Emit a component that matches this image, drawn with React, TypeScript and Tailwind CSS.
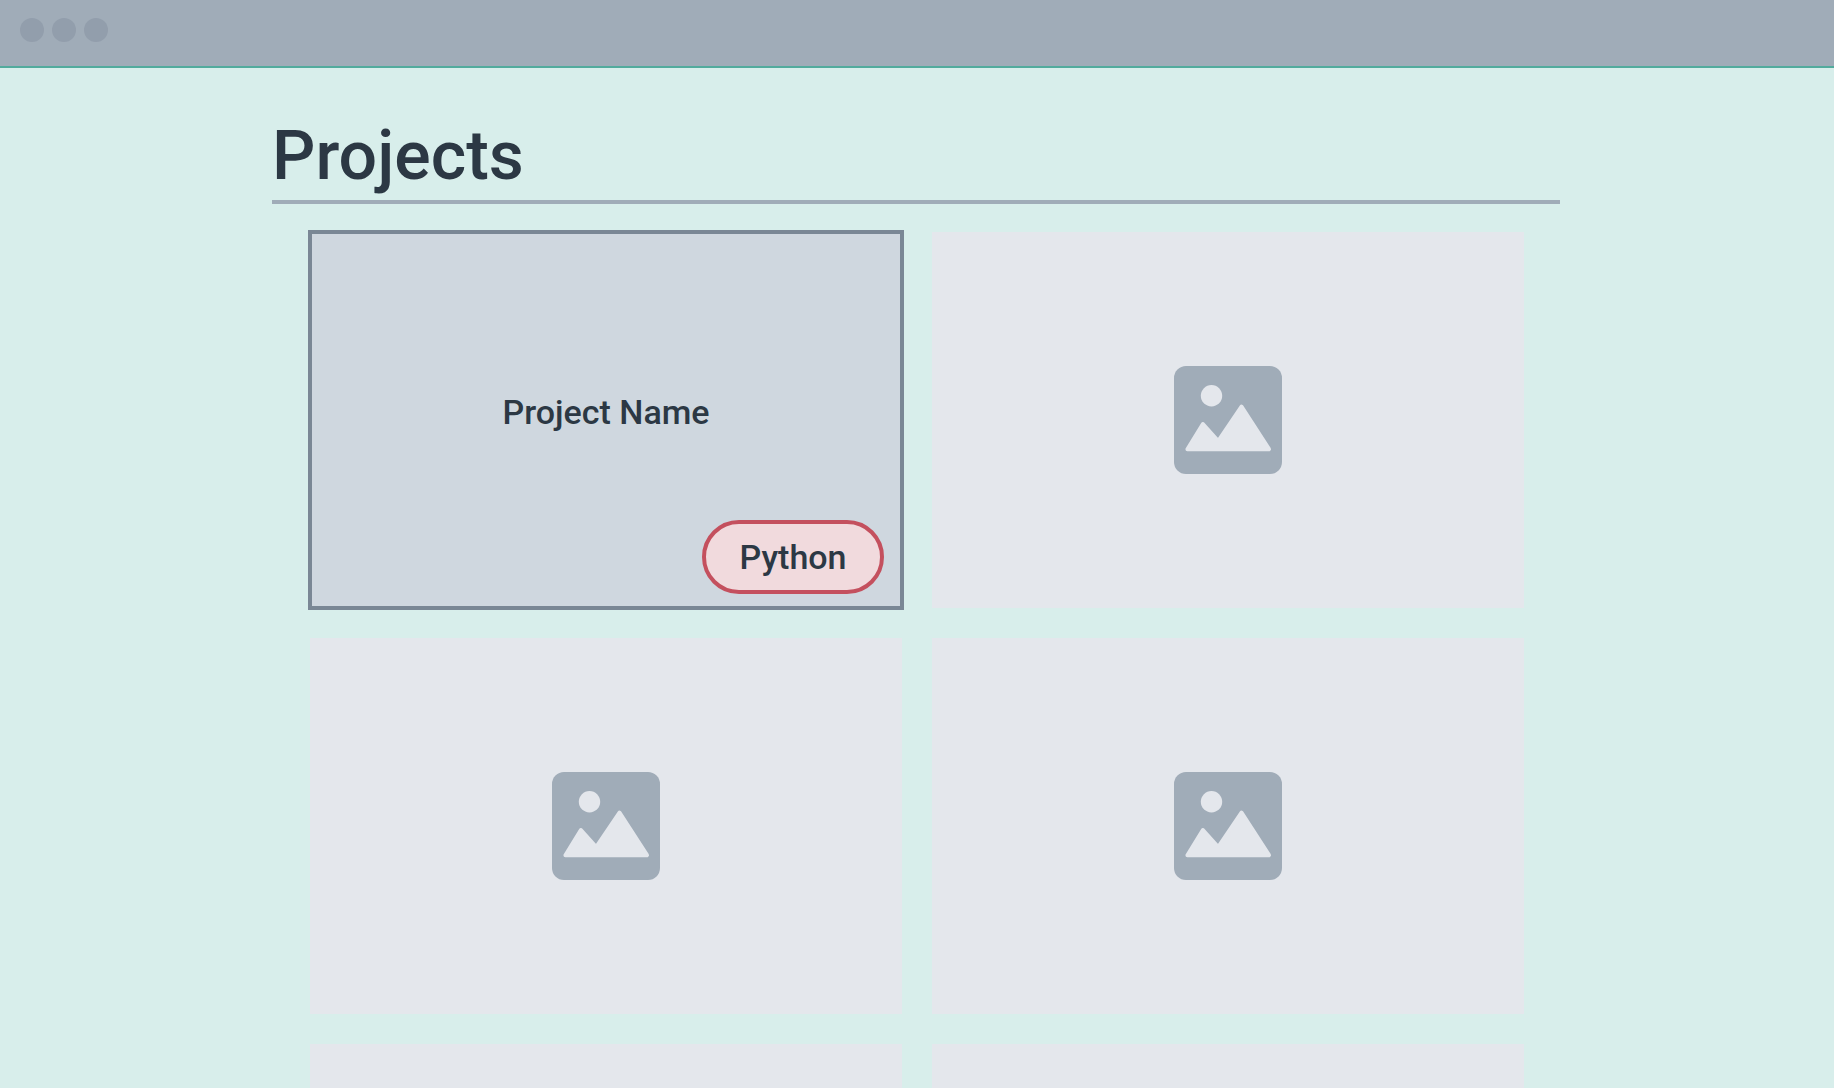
function WindowBar() {
  return (
    <header className="flex h-[68px] items-start gap-2 border-b-2 border-[#52ab9d] bg-[#a0acb8] px-5 pt-[18px]">
      <span className="size-6 rounded-full bg-[#929eac]" />
      <span className="size-6 rounded-full bg-[#929eac]" />
      <span className="size-6 rounded-full bg-[#929eac]" />
    </header>
  );
}

function PictureIcon() {
  return (
    <svg viewBox="0 0 108 108" className="size-[108px]" aria-hidden="true">
      <rect width="108" height="108" rx="12" fill="#a0acb8" />
      <circle cx="37.5" cy="29.8" r="10.7" fill="#e4e7ec" />
      <path
        d="M13.4 83.2 L28.9 58 L44.2 75 L67.5 40.6 L95 83.2 Z"
        fill="#e4e7ec"
        stroke="#e4e7ec"
        strokeWidth="4"
        strokeLinejoin="round"
      />
    </svg>
  );
}

function PlaceholderCard() {
  return (
    <li className="flex items-center justify-center bg-[#e4e7ec]">
      <PictureIcon />
    </li>
  );
}

function ProjectCard({ name, tag }: { name: string; tag: string }) {
  return (
    <li className="relative -m-0.5 flex items-center justify-center border-4 border-[#7a8795] bg-[#cfd7df] pb-4">
      <h2 className="text-[34px] leading-10 font-medium">{name}</h2>
      <span className="absolute right-4 bottom-3 flex h-[74px] min-w-[182px] items-center justify-center rounded-full border-4 border-[#c4505e] bg-[#f1dadd] px-8 text-[34px] leading-10 font-medium">
        {tag}
      </span>
    </li>
  );
}

export default function App() {
  return (
    <div className="h-screen overflow-hidden bg-[#d8eeeb] font-['Roboto','Liberation_Sans',sans-serif] text-[#2c3844]">
      <WindowBar />
      <main className="mx-auto max-w-[1290px] pt-12">
        <h1 className="pb-1 text-[68px] leading-[80px] font-medium">Projects</h1>
        <hr className="mr-0.5 border-t-4 border-[#a0acb8]" />
        <ul className="mt-7 grid auto-rows-[376px] grid-cols-2 gap-[30px] px-[38px]">
          <ProjectCard name="Project Name" tag="Python" />
          <PlaceholderCard />
          <PlaceholderCard />
          <PlaceholderCard />
          <PlaceholderCard />
          <PlaceholderCard />
        </ul>
      </main>
    </div>
  );
}
